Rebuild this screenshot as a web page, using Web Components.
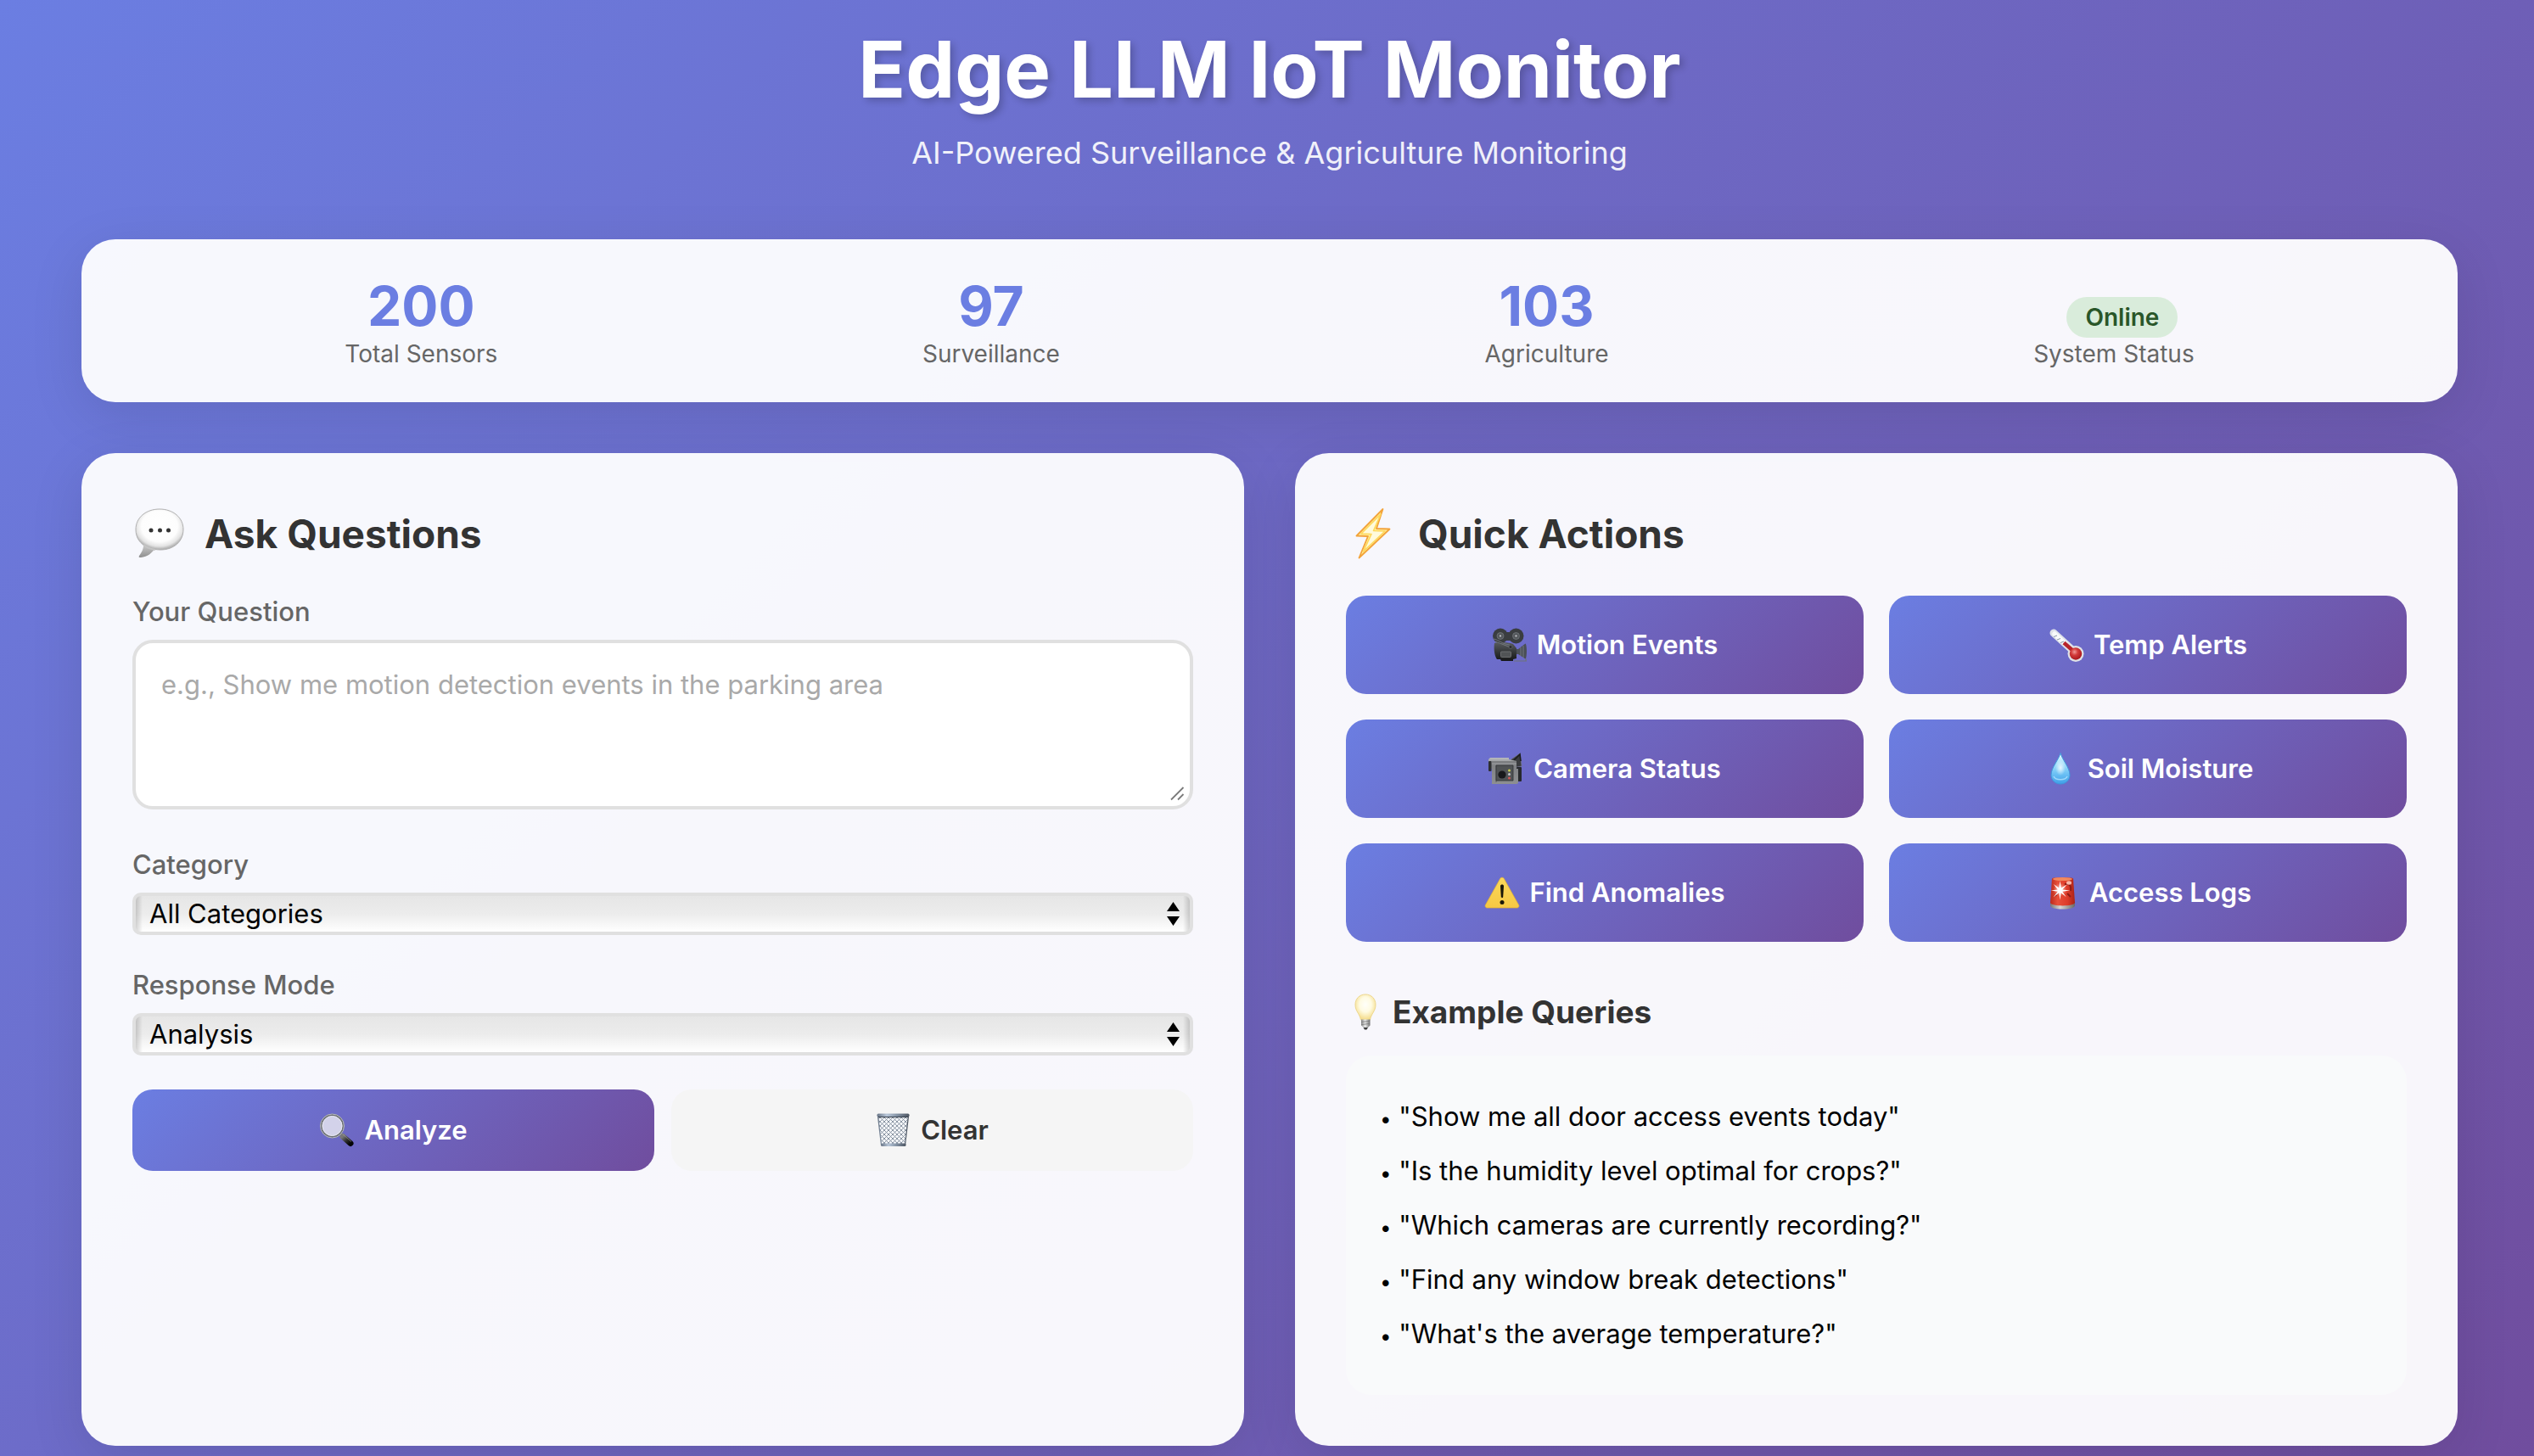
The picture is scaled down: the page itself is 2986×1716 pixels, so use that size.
<!DOCTYPE html>
<html lang="en">
<head>
<meta charset="utf-8">
<meta name="viewport" content="width=device-width, initial-scale=1">
<title>Edge LLM IoT Monitor</title>
<style>
  :root {
    --grad: linear-gradient(135deg, #6b7ee2 0%, #704d9e 100%);
    --accent: #6b7ee2;
    --panel: rgba(255, 255, 255, .95);
    --shadow: 0 16px 64px rgba(0, 0, 0, .1);
    --ink: #333;
    --muted: #666;
    --line: #e0e0e0;
  }
  * { box-sizing: border-box; }
  body {
    margin: 0;
    min-height: 100vh;
    padding: 24px 90px 12px 96px;
    background: var(--grad);
    font-family: Inter, "Liberation Sans", sans-serif;
    font-size: 31px;
    line-height: 38px;
    color: var(--ink);
  }
  main { display: block; max-width: 2800px; margin: 0 auto; }
  .columns { display: grid; grid-template-columns: repeat(auto-fit, minmax(min(100%, 800px), 1fr)); gap: 60px; margin-top: 60px; }
  .row { display: grid; grid-template-columns: 1fr 1fr; gap: 20px; }
  .quick { display: grid; grid-template-columns: 1fr 1fr; gap: 30px; }
  form { display: grid; gap: 40px; margin: 0; }
</style>
</head>
<body>
<main>
  <page-header>
    <span slot="title">Edge LLM IoT Monitor</span>
    <span slot="tagline">AI-Powered Surveillance &amp; Agriculture Monitoring</span>
  </page-header>

  <stats-bar>
    <stat-item value="200">Total Sensors</stat-item>
    <stat-item value="97">Surveillance</stat-item>
    <stat-item value="103">Agriculture</stat-item>
    <stat-item value="Online" kind="badge">System Status</stat-item>
  </stats-bar>

  <div class="columns">
    <panel-card icon="bubble" heading="Ask Questions">
      <form>
        <question-field label="Your Question" placeholder="e.g., Show me motion detection events in the parking area"></question-field>
        <select-field label="Category" options="All Categories|Surveillance|Agriculture"></select-field>
        <select-field label="Response Mode" options="Analysis|Summary|Raw Data"></select-field>
        <div class="row">
          <action-button icon="search">Analyze</action-button>
          <action-button icon="bin" kind="plain">Clear</action-button>
        </div>
      </form>
    </panel-card>

    <panel-card icon="bolt" heading="Quick Actions">
      <div class="quick">
        <action-button size="tall" icon="movie">Motion Events</action-button>
        <action-button size="tall" icon="thermo">Temp Alerts</action-button>
        <action-button size="tall" icon="camcorder">Camera Status</action-button>
        <action-button size="tall" icon="drop">Soil Moisture</action-button>
        <action-button size="tall" icon="warning">Find Anomalies</action-button>
        <action-button size="tall" icon="siren">Access Logs</action-button>
      </div>
      <query-list heading="Example Queries">
        <query-item>"Show me all door access events today"</query-item>
        <query-item>"Is the humidity level optimal for crops?"</query-item>
        <query-item>"Which cameras are currently recording?"</query-item>
        <query-item>"Find any window break detections"</query-item>
        <query-item>"What's the average temperature?"</query-item>
      </query-list>
    </panel-card>
  </div>
</main>

<script>
const BASE = '*{box-sizing:border-box}';

/* name: [width, height, markup] */
const ICONS = {
  bubble: [62, 60, `
    <defs>
      <radialGradient id="a" cx=".5" cy=".42" r=".56"><stop offset="0" stop-color="#fff"/><stop offset=".68" stop-color="#fdfdfd"/><stop offset=".88" stop-color="#e4e4e4"/><stop offset="1" stop-color="#b4b4b4"/></radialGradient>
      <linearGradient id="b" x1="0" y1="0" x2="0" y2="1"><stop offset="0" stop-color="#d8d8d8"/><stop offset="1" stop-color="#8f8f8f"/></linearGradient>
    </defs>
    <path d="M13 40c1 7-2 12-5 16-1 2 0 2 2 2 8-1 13-5 17-11z" fill="url(#b)"/>
    <path d="M32 1C48 1 60 11 60 25S49 49 33 49c-5 0-10-1-15-3C9 42 4 35 4 25 4 11 16 1 32 1z" fill="url(#a)" stroke="#b0b0b0" stroke-width="1"/>
    <path d="M13 43c3 3 9 5 14 6" stroke="#c4c4c4" stroke-width="2" fill="none"/>
    <g fill="#333"><circle cx="22" cy="26" r="2.500"/><circle cx="32.500" cy="26" r="2.500"/><circle cx="42.500" cy="26" r="2.500"/></g>`],
  bolt: [62, 60, `
    <path d="M43.500 1 12.500 32.500 26 33 15.500 58.500 51.500 24.500 36 24z" fill="#fff0a0" stroke="#f3a33a" stroke-width="1.800" stroke-linejoin="round"/>
    <path d="M41 7 18 30 30 30.500 20.500 51 46 27 32.500 26.500z" fill="#fffbdc" stroke="#ffd85a" stroke-width="1.600" stroke-linejoin="round"/>`],
  search: [42, 40, `
    <defs><linearGradient id="a" x1="0" y1="0" x2="1" y2="1"><stop offset="0" stop-color="#777"/><stop offset=".5" stop-color="#333"/><stop offset="1" stop-color="#050505"/></linearGradient></defs>
    <path d="M25 24.500 28.500 28" stroke="#999" stroke-width="3"/>
    <path d="M28 27.500 37 35.500" stroke="url(#a)" stroke-width="7" stroke-linecap="round"/>
    <path d="M27.500 24.500 38 33.500" stroke="#aaa" stroke-width=".8" opacity=".7"/>
    <circle cx="15.500" cy="15" r="13" fill="#d3d2ea" stroke="#6d7076" stroke-width="2.400"/>
    <circle cx="15.500" cy="15" r="14" fill="none" stroke="#b9bcc2" stroke-width="1"/>
    <circle cx="15.500" cy="15" r="11.500" fill="none" stroke="#e9e9f2" stroke-width="1"/>`],
  bin: [42, 40, `
    <defs>
      <linearGradient id="a"><stop offset="0" stop-color="#687586"/><stop offset=".3" stop-color="#b8c6d8"/><stop offset=".6" stop-color="#8796a8"/><stop offset="1" stop-color="#4c5561"/></linearGradient>
      <pattern id="p" width="5" height="5" patternUnits="userSpaceOnUse"><path d="M0 0 5 5M5 0 0 5" stroke="#7f8b9b" stroke-width=".9"/></pattern>
    </defs>
    <path d="M2.500 3h36L34.500 37h-28z" fill="#f4f6f9"/>
    <path d="M2.500 3h36L34.500 37h-28z" fill="url(#p)" stroke="url(#a)" stroke-width="1.300"/>
    <rect x="1.500" y=".500" width="38" height="3.400" rx="1.500" fill="url(#a)"/>
    <path d="M3 4.500h35" stroke="#333c48" stroke-width="1"/>
    <rect x="6" y="35.500" width="29.500" height="3.500" rx="1.500" fill="url(#a)"/>`],
  movie: [42, 40, `
    <defs><linearGradient id="a" x1="0" y1="0" x2="0" y2="1"><stop offset="0" stop-color="#595c5f"/><stop offset=".5" stop-color="#35383a"/><stop offset="1" stop-color="#151617"/></linearGradient></defs>
    <path d="M28 25h3l8.500-6.500c1 0 1.500 6 1.500 9s-.5 9-1.500 9L31 31h-3z" fill="#4a4f56"/>
    <path d="M37 21v14M34 23v10" stroke="#7b828b" stroke-width=".8"/>
    <path d="M26 39h15M40 36v3" stroke="#6f7478" stroke-width="1.200"/>
    <path d="M3 18c4-2 18-1 22 1l4 5v12l-4 1v2H11l-1-2H6c-3-4-4-13-3-19z" fill="url(#a)"/>
    <circle cx="10" cy="9.500" r="9" fill="#3a3d40"/><circle cx="28.500" cy="9.500" r="9" fill="#3a3d40"/>
    <path d="M12 5h15v10H12z" fill="#3a3d40"/>
    <g fill="#55595d" stroke="#777b80" stroke-width=".7"><circle cx="10" cy="9.500" r="4"/><circle cx="28.500" cy="9.500" r="4"/></g>
    <g fill="#cfd1d3"><circle cx="10" cy="9.500" r="1.100"/><circle cx="28.500" cy="9.500" r="1.100"/></g>
    <path d="M2 13c6 1 10 6 19 7M4 16l18 7" stroke="#74797e" stroke-width="1" fill="none"/>
    <circle cx="22" cy="22.500" r="2" fill="#2a2c2e" stroke="#6d7175" stroke-width=".6"/>
    <rect x="10.500" y="28" width="12" height="6.500" rx="1" fill="#515456" stroke="#77797b" stroke-width=".8"/>`],
  camcorder: [42, 40, `
    <defs><linearGradient id="a" x1="0" y1="0" x2="0" y2="1"><stop offset="0" stop-color="#b9bbbd"/><stop offset=".3" stop-color="#808285"/><stop offset="1" stop-color="#8d8f91"/></linearGradient></defs>
    <path d="M24 11 37 2l2 15-6 1z" fill="#3a3c3f" stroke="#77797c" stroke-width=".6"/>
    <path d="M30 10l7-7 1 8" stroke="#1b1c1d" stroke-width="1.600" fill="none"/>
    <rect x="33" y="18" width="6" height="17" rx="1" fill="#27292c"/>
    <path d="M0 9 2 7h22v2l9 2v9h2v17l-2 1H4V20l-4-1z" fill="url(#a)"/>
    <rect x="0" y="11" width="3.500" height="12" rx="1" fill="#2d2f31"/>
    <path d="M3 12h30M9 16v20" stroke="#5c5e60" stroke-width="1"/>
    <path d="M9 16h20v18H9z" fill="#505355" stroke="#2f3133" stroke-width=".8"/>
    <ellipse cx="16" cy="27" rx="4.600" ry="4.600" fill="#17181a"/>
    <circle cx="24.500" cy="22" r="1.500" fill="#c7cd4c"/><circle cx="24.500" cy="26.500" r="1.500" fill="#bfc3c7"/><circle cx="24.500" cy="31" r="1.500" fill="#d05555"/>`],
  thermo: [42, 40, `
    <defs><radialGradient id="a" cx=".4" cy=".35" r=".7"><stop offset="0" stop-color="#f19a98"/><stop offset=".4" stop-color="#d23a3a"/><stop offset="1" stop-color="#a31219"/></radialGradient></defs>
    <path d="M6 6 29 27" stroke="#dfe3ea" stroke-width="9" stroke-linecap="round"/>
    <circle cx="32" cy="30.500" r="9.500" fill="#dfe1e6"/>
    <path d="M7 7 20 19" stroke="#f8fafb" stroke-width="5.500" stroke-linecap="round"/>
    <path d="M18 17.500 30 28" stroke="#b8242a" stroke-width="4.500"/>
    <path d="M6 10.500l4-1.500M10 14l4-1.500M14 17.500l4-1.500" stroke="#8b98a8" stroke-width="1"/>
    <circle cx="32" cy="30.500" r="7.200" fill="url(#a)"/>`],
  drop: [42, 40, `
    <defs>
      <linearGradient id="a" x1="0" y1="0" x2="0" y2="1"><stop offset="0" stop-color="#e6fbff"/><stop offset=".35" stop-color="#a5e0fa"/><stop offset=".65" stop-color="#6fc3f5"/><stop offset="1" stop-color="#3f9fe8"/></linearGradient>
      <radialGradient id="b"><stop offset="0" stop-color="#fff" stop-opacity=".8"/><stop offset="1" stop-color="#fff" stop-opacity="0"/></radialGradient>
    </defs>
    <path d="M21 1.500c2 8 11 17 11 26 0 6-5 10.500-11 10.500S10 33.500 10 27.500c0-9 9-18 11-26z" fill="url(#a)" stroke="#3f98dc" stroke-width="1"/>
    <ellipse cx="21" cy="19" rx="6" ry="9" fill="url(#b)"/>
    <path d="M13 29c2 5 14 5 16 0" stroke="#bfeaff" stroke-width="1.500" fill="none" opacity=".7"/>`],
  warning: [42, 40, `
    <defs><linearGradient id="a" x1="0" y1="0" x2="0" y2="1"><stop offset="0" stop-color="#fbd85a"/><stop offset="1" stop-color="#f6c843"/></linearGradient></defs>
    <path d="M18.700 3.500c1-1.800 3.600-1.800 4.600 0l17.300 31c1 1.700-.2 3.500-2 3.500H3.400c-1.800 0-3-1.800-2-3.500z" fill="url(#a)" stroke="#e0ae35" stroke-width=".7"/>
    <path d="M19 12.500c0-2.600 4-2.600 4 0L22.200 25c-.1 1.600-2.300 1.600-2.400 0z" fill="#1a1708"/><circle cx="21" cy="31.500" r="2.500" fill="#1a1708"/>`],
  siren: [42, 40, `
    <defs>
      <linearGradient id="a"><stop offset="0" stop-color="#bb2a1c"/><stop offset=".3" stop-color="#e8503a"/><stop offset=".7" stop-color="#dd3b29"/><stop offset="1" stop-color="#a92216"/></linearGradient>
      <linearGradient id="b"><stop offset="0" stop-color="#777"/><stop offset=".4" stop-color="#d8d6d2"/><stop offset="1" stop-color="#6a6866"/></linearGradient>
      <radialGradient id="c"><stop offset="0" stop-color="#fff" stop-opacity=".9"/><stop offset="1" stop-color="#ffb0a0" stop-opacity="0"/></radialGradient>
    </defs>
    <path d="M7 31h29v4c0 3-6 4.500-14.500 4.500S7 38 7 35z" fill="url(#b)"/>
    <path d="M9 3.500C9.500 1.500 33 1.500 34 3.500L36 32c-1 4.500-28 4.500-29 0z" fill="url(#a)"/>
    <ellipse cx="21.500" cy="4" rx="11.500" ry="2" fill="#f1895f"/>
    <path d="M24 10c6-1 8 2 7 8M13 24l4-5M27 21l4 4" stroke="#8f1d16" stroke-width="2" fill="none"/>
    <ellipse cx="29" cy="8.500" rx="3" ry="2.200" fill="#f7b7a8"/>
    <circle cx="18.500" cy="16.500" r="8" fill="url(#c)"/>
    <path d="M18.500 6l1.300 8.500 7-4-5.600 6 9 1-9 1.200 4.600 6.500-6.200-5-1.100 8.500-1.200-8.500-6.500 5 5-6.500-8-1.200 8-1-5-6.500 6.500 4.500z" fill="#fff"/>`],
  bulb: [46, 46, `
    <defs>
      <radialGradient id="a" cx=".5" cy=".4" r=".58"><stop offset="0" stop-color="#fffffa"/><stop offset=".5" stop-color="#fffbe2"/><stop offset="1" stop-color="#f5dd8c"/></radialGradient>
      <linearGradient id="b"><stop offset="0" stop-color="#858585"/><stop offset=".45" stop-color="#ececec"/><stop offset="1" stop-color="#707070"/></linearGradient>
    </defs>
    <path d="M23 2c7 0 12 5 12 12 0 8-5 10-6.500 18h-11C16 24 11 22 11 14 11 7 16 2 23 2z" fill="url(#a)" stroke="#eed88f" stroke-width="1"/>
    <path d="M18 31.500h10.500v7L26 41h-5l-3-2.500z" fill="url(#b)"/>
    <path d="M18 34.500l10-1M18 37.500l10-1" stroke="#777" stroke-width=".8"/>
    <path d="M20.500 41h5.500l-1.500 2.500h-2.500z" fill="#3c3c3c"/>`],
};

class AppIcon extends HTMLElement {
  connectedCallback() {
    const [w, h, art] = ICONS[this.getAttribute('name')];
    this.attachShadow({ mode: 'open' }).innerHTML =
      `<style>:host{display:inline-flex;flex:none}svg{display:block}</style>
       <svg aria-hidden="true" width="${w}" height="${h}" viewBox="0 0 ${w} ${h}" fill="none">${art}</svg>`;
  }
}

class PageHeader extends HTMLElement {
  connectedCallback() {
    this.attachShadow({ mode: 'open' }).innerHTML = `
      <style>${BASE}
        :host{display:block;text-align:center;color:#fff;margin-bottom:78px}
        h1{margin:0 0 16px;font-size:92px;line-height:116px;font-weight:700;text-shadow:4px 4px 8px rgba(0,0,0,.2)}
        p{margin:0;font-size:36px;line-height:48px;opacity:.9}
      </style>
      <header><h1><slot name="title"></slot></h1><p><slot name="tagline"></slot></p></header>`;
  }
}

class StatsBar extends HTMLElement {
  connectedCallback() {
    this.attachShadow({ mode: 'open' }).innerHTML = `
      <style>${BASE}
        :host{display:flex;flex-wrap:wrap;justify-content:space-around;align-items:flex-end;padding:40px 60px;
          border-radius:40px;background:var(--panel);box-shadow:var(--shadow)}
      </style><slot></slot>`;
  }
}

class StatItem extends HTMLElement {
  connectedCallback() {
    this.attachShadow({ mode: 'open' }).innerHTML = `
      <style>${BASE}
        :host{display:flex;flex-direction:column;align-items:center;font-size:28px}
        .value{font-size:64px;line-height:78px;font-weight:700;color:var(--accent)}
        :host([kind=badge]) .value{font-size:28px;line-height:48px;font-weight:600;padding:0 22px;margin:0 0 2px 20px;
          border-radius:24px;background:#d9ecdb;color:#295629}
        .name{line-height:34px;color:var(--muted)}
      </style>
      <span class="value">${this.getAttribute('value')}</span><span class="name"><slot></slot></span>`;
  }
}

class PanelCard extends HTMLElement {
  connectedCallback() {
    this.attachShadow({ mode: 'open' }).innerHTML = `
      <style>${BASE}
        :host{display:block;padding:60px;border-radius:40px;background:var(--panel);box-shadow:var(--shadow)}
        h2{display:flex;align-items:center;gap:23px;margin:0 0 38px;font-size:46px;line-height:70px;font-weight:700}
      </style>
      <section><h2><app-icon name="${this.getAttribute('icon')}"></app-icon><span>${this.getAttribute('heading')}</span></h2><slot></slot></section>`;
  }
}

const FIELD = `${BASE}
  :host{display:block}
  label{display:block;margin-bottom:14px;font-weight:500;color:var(--muted)}
  .box{position:relative}`;

class QuestionField extends HTMLElement {
  connectedCallback() {
    this.attachShadow({ mode: 'open' }).innerHTML = `
      <style>${FIELD}
        :host{margin-bottom:6px}
        textarea{display:block;width:100%;height:200px;padding:30px;border:4px solid var(--line);border-radius:24px;
          background:#fff;font:inherit;color:var(--ink);resize:none;outline:none}
        textarea::placeholder{color:#a9a9a9;opacity:1}
        svg{position:absolute;right:10px;bottom:10px;pointer-events:none}
      </style>
      <label for="q">${this.getAttribute('label')}</label>
      <div class="box">
        <textarea id="q" placeholder="${this.getAttribute('placeholder')}"></textarea>
        <svg aria-hidden="true" width="18" height="18" viewBox="0 0 18 18" stroke="#7a7a7a" stroke-width="1.800"><path d="M2 16.500 16.500 2M10 16.500 16.500 10"/></svg>
      </div>`;
  }
}

class SelectField extends HTMLElement {
  connectedCallback() {
    const options = this.getAttribute('options').split('|').map(o => `<option>${o}</option>`).join('');
    this.attachShadow({ mode: 'open' }).innerHTML = `
      <style>${FIELD}
        select{display:block;width:100%;height:50px;padding:0 40px 0 16px;border:4px solid var(--line);border-radius:10px;
          appearance:none;font:inherit;line-height:38px;color:#000;outline:none;
          background:
            linear-gradient(to right,rgba(0,0,0,.16),transparent 8px,transparent calc(100% - 8px),rgba(0,0,0,.16)),
            linear-gradient(#e6e6e6,#ececec 50%,#fff)}
        svg{position:absolute;right:16px;top:11px;pointer-events:none}
      </style>
      <label for="s">${this.getAttribute('label')}</label>
      <div class="box">
        <select id="s">${options}</select>
        <svg aria-hidden="true" width="15" height="28" viewBox="0 0 15 28"><path d="M7.500 0 15 11H0zM7.500 28 15 17H0z"/></svg>
      </div>`;
  }
}

class ActionButton extends HTMLElement {
  connectedCallback() {
    this.attachShadow({ mode: 'open' }).innerHTML = `
      <style>${BASE}
        :host{display:block}
        button{display:flex;width:100%;align-items:center;justify-content:center;gap:11px;padding:29px 20px;border:0;border-radius:24px;
          background:var(--grad);color:#fff;font:inherit;font-weight:600;cursor:pointer}
        :host([kind=plain]) button{background:#f5f5f5;color:var(--ink)}
        :host([size=tall]) button{padding:39px 20px}
        app-icon{margin:-1px 0}
      </style>
      <button type="button"><app-icon name="${this.getAttribute('icon')}"></app-icon><span><slot></slot></span></button>`;
  }
}

class QueryList extends HTMLElement {
  connectedCallback() {
    this.attachShadow({ mode: 'open' }).innerHTML = `
      <style>${BASE}
        :host{display:block;margin-top:60px}
        h3{display:flex;align-items:center;gap:9px;margin:0 0 28px;font-size:37px;line-height:46px;font-weight:700}
        .list{padding:40px;border-radius:30px;background:#f9fafb;color:#000}
      </style>
      <h3><app-icon name="bulb"></app-icon><span>${this.getAttribute('heading')}</span></h3>
      <div class="list" role="list"><slot></slot></div>`;
  }
}

class QueryItem extends HTMLElement {
  connectedCallback() {
    this.setAttribute('role', 'listitem');
    this.attachShadow({ mode: 'open' }).innerHTML =
      `<style>:host{display:block;line-height:64px}.dot{font-size:24px;line-height:1}</style><span class="dot">•</span> <slot></slot>`;
  }
}

customElements.define('app-icon', AppIcon);
customElements.define('page-header', PageHeader);
customElements.define('stats-bar', StatsBar);
customElements.define('stat-item', StatItem);
customElements.define('panel-card', PanelCard);
customElements.define('question-field', QuestionField);
customElements.define('select-field', SelectField);
customElements.define('action-button', ActionButton);
customElements.define('query-list', QueryList);
customElements.define('query-item', QueryItem);
</script>
</body>
</html>
